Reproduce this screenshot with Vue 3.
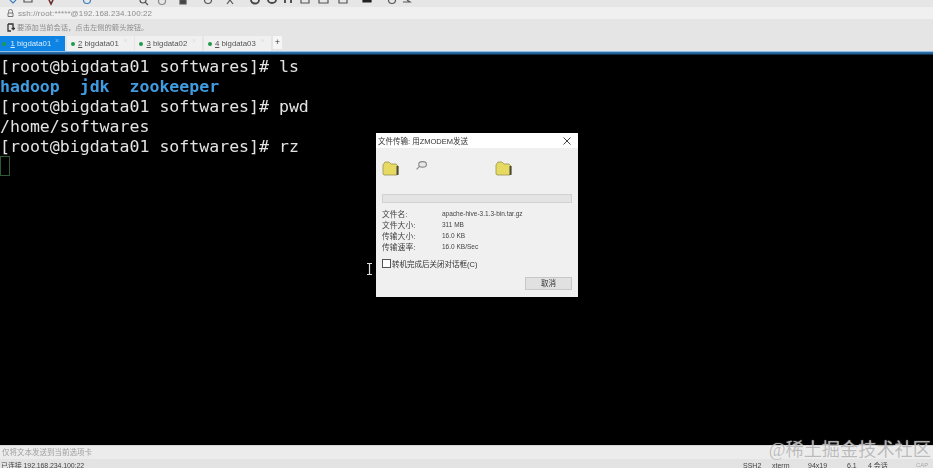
<script setup>
const tabs = [
  { n: '1', name: 'bigdata01', active: true },
  { n: '2', name: 'bigdata01' },
  { n: '3', name: 'bigdata02' },
  { n: '4', name: 'bigdata03' },
]
const lines = [
  { t: '[root@bigdata01 softwares]# ls' },
  { t: 'hadoop  jdk  zookeeper', dir: true },
  { t: '[root@bigdata01 softwares]# pwd' },
  { t: '/home/softwares' },
  { t: '[root@bigdata01 softwares]# rz' },
]
const info = [
  ['文件名:', 'apache-hive-3.1.3-bin.tar.gz'],
  ['文件大小:', '311 MB'],
  ['传输大小:', '16.0 KB'],
  ['传输速率:', '16.0 KB/Sec'],
]
</script>

<template>
  <div class="app">
    <div class="toolbar">
      <svg class="tool-icons" width="420" height="7" viewBox="0 0 420 7">
        <g fill="none" stroke="#555" stroke-width="1.2">
          <path d="M10 0l3 3 3-3" stroke="#3a7fc0" />
          <path d="M24 0v2h8V0" />
          <path d="M49 0l2 4 2-4" stroke="#6b2a2a" stroke-width="1.600" />
          <circle cx="87" cy="0" r="3.500" stroke="#3a7fc0" />
          <circle cx="143" cy="0" r="3" />
          <path d="M145 2l3 3" />
          <circle cx="162" cy="1" r="3.500" stroke="#888" />
          <path d="M180 0h6v4h-6z" fill="#444" />
          <circle cx="208" cy="0" r="3.500" />
          <path d="M227 4l3-4 3 4" />
          <path d="M251 0a4 3.500 0 0 0 8 0" stroke-width="1.800" stroke="#444" />
          <path d="M268 0a4 3 0 0 0 8 0" stroke-width="1.800" stroke="#444" />
          <path d="M285 0v3M291 0v3" stroke-width="1.800" stroke="#444" />
          <path d="M301 0v3h8V0" />
          <path d="M319 0v3h9V0" />
          <path d="M339 0v3h8V0" />
          <path d="M363 0h8v2h-8z" fill="#222" stroke="#222" />
          <circle cx="392" cy="0" r="3.500" />
          <path d="M403 2h7l-3-2" />
        </g>
      </svg>
    </div>
    <div class="address">
      <svg width="7" height="8" viewBox="0 0 7 8"><path d="M1.500 4V2.500a2 2 0 0 1 4 0V4M1 4h5v3.500H1z" fill="none" stroke="#777" /></svg>
      <span>ssh://root:*****@192.168.234.100:22</span>
    </div>
    <div class="hint">
      <svg width="8" height="9" viewBox="0 0 8 9"><path d="M1 1h5v3M1 1v7h3M4.500 5.500h3.500M6.200 3.800v3.500" fill="none" stroke="#333" stroke-width="1.300" /></svg>
      <span>要添加当前会话，点击左侧的箭头按钮。</span>
    </div>
    <div class="tabs">
      <div v-for="tab in tabs" :key="tab.n" class="tab" :class="{ active: tab.active }">
        <i class="dot"></i>
        <span class="tab-label"><u>{{ tab.n }}</u> {{ tab.name }}</span>
        <span class="tab-x">×</span>
      </div>
      <div class="tab-add">+</div>
    </div>
    <div class="accent"></div>

    <div class="terminal">
      <div v-for="(line, i) in lines" :key="i" class="line" :class="{ dir: line.dir }">{{ line.t }}</div>
      <div class="cursor"></div>

      <svg class="pointer" width="7" height="12" viewBox="0 0 7 12"><path d="M1 .5h5M1 11.500h5M3.500 .5v11" fill="none" stroke="#ddd" stroke-width="1.200" /></svg>

      <div class="dialog">
        <div class="dialog-title">
          <span>文件传输: 用ZMODEM发送</span>
          <svg width="8" height="8" viewBox="0 0 8 8"><path d="M.5 .5l7 7M7.500 .5l-7 7" stroke="#444" fill="none" /></svg>
        </div>
        <div class="dialog-body">
          <div class="icons">
            <svg width="17" height="15" viewBox="0 0 17 15"><path d="M1 4l2-3h4l2 2h5l2 2v8l-1 1H2l-1-1z" fill="#e6da62" stroke="#9a9350" stroke-width=".8" /><path d="M14.500 5h2v9h-2z" fill="#4a4a3a" /></svg>
            <svg class="flash" width="11" height="9" viewBox="0 0 11 9"><ellipse cx="6.500" cy="3.500" rx="3.500" ry="2.500" fill="#e8e8e8" stroke="#888" /><path d="M4 5L1 8" stroke="#888" fill="none" /></svg>
            <svg class="folder-right" width="17" height="15" viewBox="0 0 17 15"><path d="M1 4l2-3h4l2 2h5l2 2v8l-1 1H2l-1-1z" fill="#e6da62" stroke="#9a9350" stroke-width=".8" /><path d="M14.500 5h2v9h-2z" fill="#4a4a3a" /></svg>
          </div>
          <div class="progress"></div>
          <div class="info">
            <div v-for="row in info" :key="row[0]" class="info-row">
              <span class="info-key">{{ row[0] }}</span>
              <span class="info-val">{{ row[1] }}</span>
            </div>
          </div>
          <label class="check"><i class="box"></i><span>转机完成后关闭对话框(C)</span></label>
          <div class="actions"><div class="cancel">取消</div></div>
        </div>
      </div>
    </div>

    <div class="send-bar">仅将文本发送到当前选项卡</div>
    <div class="status">
      <span class="status-left">已连接 192.168.234.100:22</span>
      <div class="status-right">
        <span>SSH2</span><span>xterm</span><span>94x19</span><span>6,1</span><span>4 会话</span><span class="caps">CAP</span>
      </div>
    </div>
    <div class="watermark">@稀土掘金技术社区</div>
  </div>
</template>

<style>
html, body { margin: 0; background: #000; overflow: hidden; }
</style>

<style scoped>
.app {
  position: relative;
  width: 933px;
  height: 468px;
  display: flex;
  flex-direction: column;
  overflow: hidden;
  background: #000;
  font-family: "Liberation Sans", "Noto Sans CJK SC", sans-serif;
}
.toolbar { height: 7px; background: #e6e6e6; flex: none; }
.tool-icons { display: block; filter: blur(.4px); }
.address {
  height: 12px;
  flex: none;
  background: #f0f0f0;
  display: flex;
  align-items: center;
  gap: 4px;
  padding-left: 7px;
  font-size: 8px;
  color: #8c8c8c;
  filter: blur(.35px);
  letter-spacing: .12px;
}
.hint {
  height: 17px;
  flex: none;
  background: #e5e5e5;
  display: flex;
  align-items: center;
  gap: 2px;
  padding-left: 7px;
  padding-bottom: 1px;
  box-sizing: border-box;
  font-size: 7.300px;
  color: #8c8c8c;
  filter: blur(.35px);
}
.tabs {
  height: 15px;
  flex: none;
  background: #e5e5e5;
  display: flex;
  gap: 1.500px;
  font-size: 7.800px;
}
.tab {
  width: 67px;
  background: #f0f0f0;
  color: #555;
  display: flex;
  align-items: center;
  padding-left: 4px;
  box-sizing: border-box;
  position: relative;
  filter: blur(.3px);
}
.tab.active { width: 65px; background: #0d84e4; color: #d8ecff; padding-left: 2px; }
.dot { width: 4px; height: 4px; border-radius: 50%; background: #1d9a4a; margin-right: 3.500px; flex: none; }
.tab.active .dot { margin-right: 4.500px; }
.tab-label { white-space: nowrap; }
.tab-x { position: absolute; right: 6px; top: 1px; font-size: 7px; color: #dcdcdc; }
.tab.active .tab-x { color: #7dbdf0; }
.tab-add {
  width: 9px;
  height: 13px;
  margin-left: 1px;
  background: #f6f6f6;
  color: #444;
  font-size: 9px;
  line-height: 13px;
  text-align: center;
}
.accent {
  height: 4px;
  flex: none;
  background: linear-gradient(#8fbfe6 0 1px, #2a6fa8 1px 2px, #1f5f96 2px 3px, #12304a 3px 4px);
}
.terminal {
  position: relative;
  flex: 1;
  padding-top: 2px;
  background: #000;
  font-family: "DejaVu Sans Mono", monospace;
  font-size: 16.560px;
  color: #e2e2e2;
}
.line {
  height: 20px;
  line-height: 20px;
  white-space: pre;
  filter: blur(.45px);
}
.line.dir { color: #3f9ce0; font-weight: 700; }
.cursor {
  width: 10px;
  height: 20px;
  margin-top: -1px;
  box-sizing: border-box;
  border: 1px solid #2d5a34;
  filter: blur(.3px);
}
.pointer { position: absolute; left: 366px; top: 208px; }
.dialog {
  position: absolute;
  left: 376px;
  top: 78px;
  width: 202px;
  height: 164px;
  background: #f0f0f0;
  font-family: "Liberation Sans", "Noto Sans CJK SC", sans-serif;
  display: flex;
  flex-direction: column;
  filter: blur(.35px);
}
.dialog-title {
  height: 15px;
  flex: none;
  background: #fff;
  display: flex;
  align-items: center;
  justify-content: space-between;
  padding: 0 7px 0 2px;
  font-size: 7.500px;
  color: #333;
}
.dialog-body { flex: 1; padding: 13px 6px 0; display: flex; flex-direction: column; }
.icons { display: flex; align-items: flex-start; height: 15px; }
.flash { margin: 0 0 0 17px; transform: scale(1.1); }
.folder-right { margin-left: 68px; }
.progress {
  height: 9px;
  margin-top: 18px;
  background: #e4e4e4;
  border: 1px solid #d2d2d2;
  box-sizing: border-box;
}
.info { margin-top: 5px; }
.info-row { height: 11px; display: flex; align-items: center; font-size: 7.800px; color: #444; }
.info-key { width: 60px; flex: none; }
.info-val { font-size: 6.500px; color: #444; }
.check { display: flex; align-items: center; gap: 1px; margin-top: 6px; font-size: 7.500px; color: #333; }
.box { width: 7px; height: 7px; background: #fff; border: 1px solid #555; }
.actions { display: flex; justify-content: flex-end; margin-top: 8px; }
.cancel {
  width: 47px;
  height: 13px;
  background: #e1e1e1;
  border: 1px solid #c8c8c8;
  box-sizing: border-box;
  text-align: center;
  line-height: 11px;
  font-size: 7.500px;
  color: #333;
}
.send-bar {
  height: 14px;
  flex: none;
  background: #ececec;
  border-top: 1px solid #d6d6d6;
  box-sizing: border-box;
  padding-left: 2px;
  font-size: 7.500px;
  line-height: 13px;
  color: #a0a0a0;
  filter: blur(.35px);
}
.status {
  height: 9px;
  flex: none;
  background: #e3e3e3;
  display: flex;
  justify-content: space-between;
  font-size: 7px;
  line-height: 13px;
  color: #444;
  padding-left: 1px;
  filter: blur(.3px);
  overflow: hidden;
}
.status-left { letter-spacing: -.1px; }
.status-right {
  display: grid;
  grid-template-columns: 29px 36px 39px 21px 48px 17px;
  width: 190px;
  white-space: nowrap;
}
.caps { color: #aaa; font-size: 6px; }
.watermark {
  position: absolute;
  right: 2px;
  top: 439px;
  font-family: "Liberation Serif", "Noto Sans CJK SC", serif;
  font-size: 18.200px;
  line-height: 22px;
  color: rgba(175, 175, 175, .85);
  text-shadow: 0 0 1px rgba(255, 255, 255, .8);
  white-space: nowrap;
}
</style>
